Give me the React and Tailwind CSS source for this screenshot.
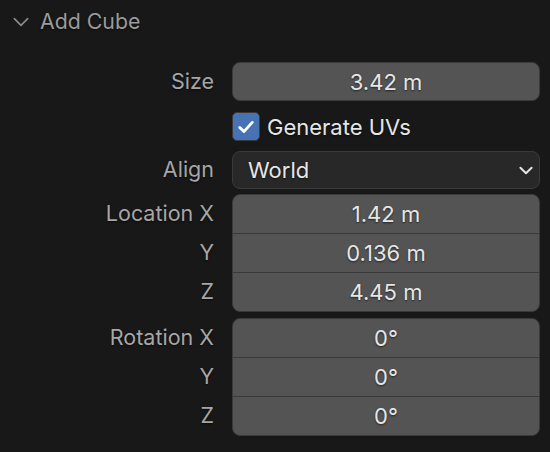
import React from "react";

const textShadow = "[text-shadow:0_1px_2px_rgba(0,0,0,0.6)]";

function Label({ children }) {
  return (
    <div className={`w-[232px] shrink-0 pr-[18px] text-right text-[21.5px] text-[#a6a6a6] ${textShadow}`}>
      {children}
    </div>
  );
}

function Chevron({ className, strokeWidth = 2 }) {
  return (
    <svg viewBox="0 0 20 12" className={className} fill="none" stroke="currentColor" strokeWidth={strokeWidth} strokeLinecap="round" strokeLinejoin="round">
      <path d="M2 2 L10 10 L18 2" />
    </svg>
  );
}

function NumberField({ value }) {
  return (
    <div className={`flex h-[39px] w-[308px] items-center justify-center rounded-[8px] border border-[#3a3a3a] bg-[#545454] text-[22px] text-[#e6e6e6] ${textShadow}`}>
      {value}
    </div>
  );
}

function VectorGroup({ label, values }) {
  const axes = ["X", "Y", "Z"];
  return (
    <div className="flex">
      <div className="flex w-[232px] shrink-0 flex-col">
        {axes.map((a, i) => (
          <div key={a} className={`flex h-[39px] items-center justify-end pr-[18px] text-[21.5px] text-[#a6a6a6] ${textShadow}`}>
            {i === 0 ? `${label} ${a}` : a}
          </div>
        ))}
      </div>
      <div className="w-[308px] overflow-hidden rounded-[8px] border border-[#3a3a3a] bg-[#3a3a3a]">
        {values.map((v, i) => (
          <div
            key={i}
            className={`flex h-[38px] items-center justify-center bg-[#545454] text-[22px] text-[#e6e6e6] ${textShadow} ${i > 0 ? "mt-[1px]" : ""}`}
          >
            {v}
          </div>
        ))}
      </div>
    </div>
  );
}

export default function App() {
  return (
    <div className="h-[452px] w-[550px] overflow-hidden bg-[#181818] font-['Inter',sans-serif] leading-none">
      <div className="flex h-[44px] items-center pl-[12px]">
        <Chevron className="h-[10px] w-[18px] text-[#8a8a8a]" />
        <span className={`ml-[10px] text-[21.3px] text-[#9a9a9a] ${textShadow}`}>Add Cube</span>
      </div>

      <div className="mt-[18px] flex items-center">
        <Label>Size</Label>
        <NumberField value="3.42 m" />
      </div>

      <div className="mt-[11px] flex items-center">
        <div className="w-[232px] shrink-0" />
        <div className="flex h-[29px] w-[28px] items-center justify-center rounded-[5px] border border-[#3a3a3a] bg-[#4772b3]">
          <svg viewBox="0 0 24 24" className="h-[20px] w-[20px]" fill="none" stroke="#ffffff" strokeWidth="3.4" strokeLinecap="round" strokeLinejoin="round">
            <path d="M4.5 12.5 L9.5 17.5 L19.5 6.5" />
          </svg>
        </div>
        <span className={`ml-[7px] text-[22px] text-[#e6e6e6] ${textShadow}`}>Generate UVs</span>
      </div>

      <div className="mt-[10px] flex items-center">
        <Label>Align</Label>
        <div className={`flex h-[38px] w-[308px] items-center justify-between rounded-[8px] border border-[#3a3a3a] bg-[#282828] pl-[15px] pr-[6px] text-[22px] text-[#e6e6e6] ${textShadow}`}>
          <span>World</span>
          <Chevron className="h-[9px] w-[14px] text-[#e6e6e6]" strokeWidth={2.8} />
        </div>
      </div>

      <div className="mt-[5px]">
        <VectorGroup label="Location" values={["1.42 m", "0.136 m", "4.45 m"]} />
      </div>

      <div className="mt-[6px]">
        <VectorGroup label="Rotation" values={["0°", "0°", "0°"]} />
      </div>
    </div>
  );
}
